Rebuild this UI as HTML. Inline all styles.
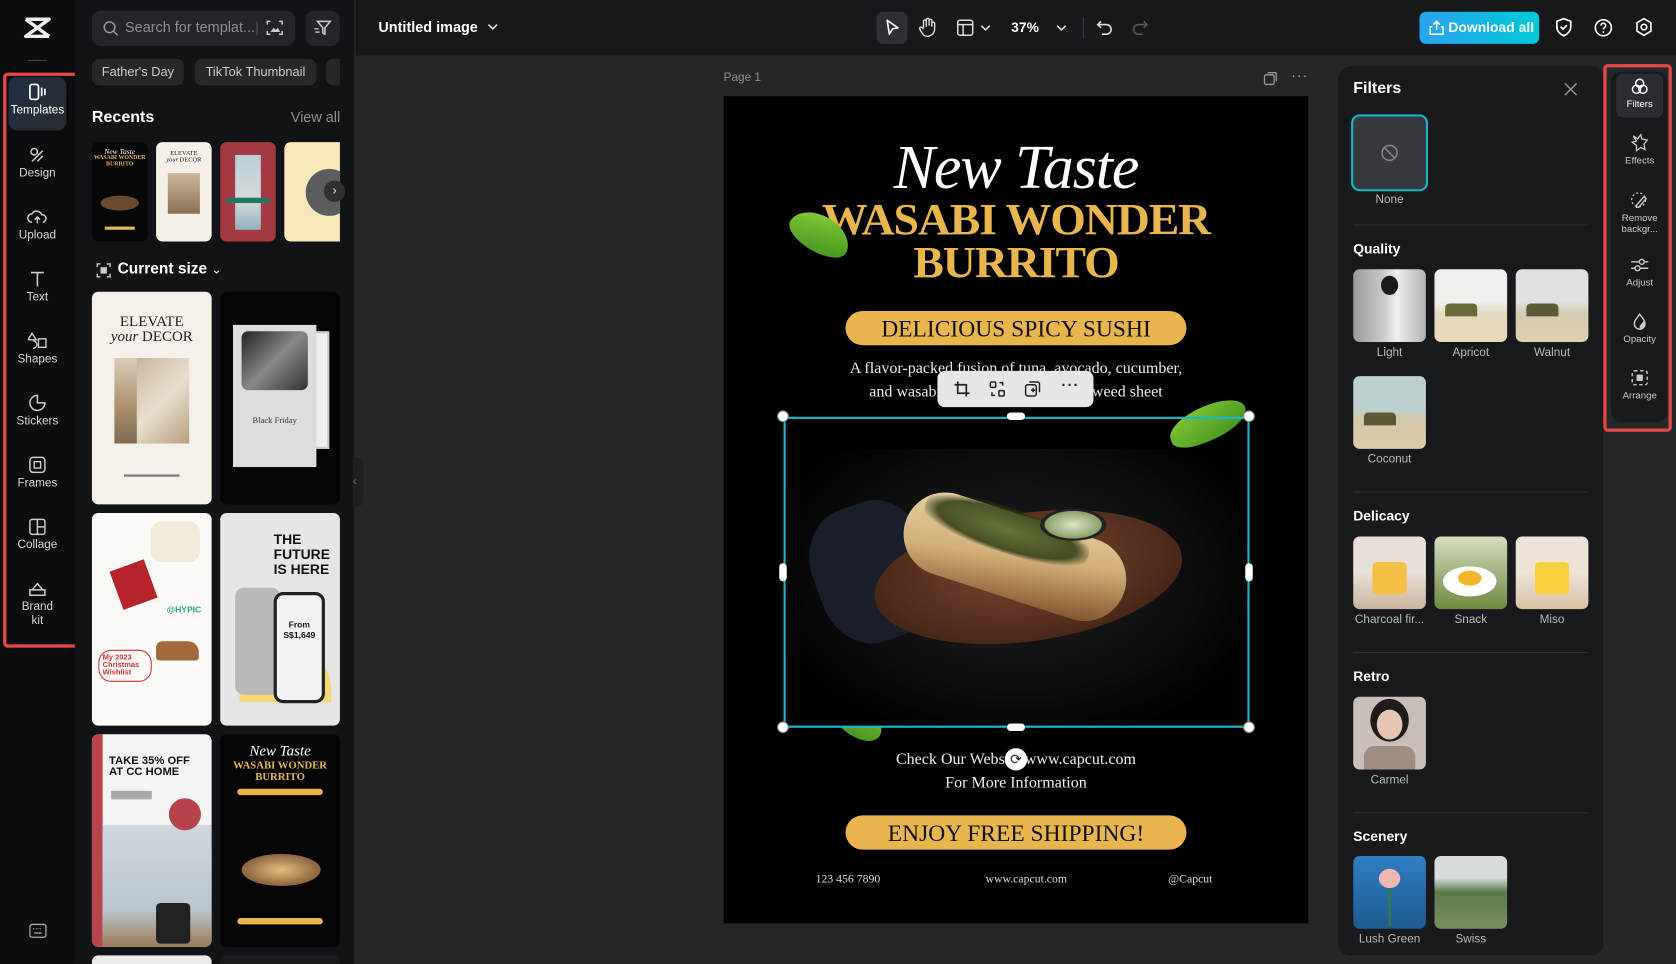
<!DOCTYPE html>
<html><head><meta charset="utf-8">
<style>
*{box-sizing:border-box;margin:0;padding:0}
html,body{width:1676px;height:964px;overflow:hidden;background:#25262a;font-family:"Liberation Sans",sans-serif}
#w{position:absolute;left:0;top:0;width:1568px;height:902px;transform:scale(1.0689,1.0687);transform-origin:0 0;background:#25262a;overflow:hidden}
.a{position:absolute}
.nav{position:absolute;left:8px;width:54px;text-align:center;color:#d4d5d8;font-size:11px}
.nav svg{display:block;margin:0 auto 3px}
.rt{position:absolute;left:1512px;width:44px;text-align:center;color:#c9cacd;font-size:9px;line-height:10px}
.rt svg{display:block;margin:0 auto 3px}
.tile{position:absolute;width:68px;height:68px;border-radius:6px;overflow:hidden}
.lbl{position:absolute;width:80px;text-align:center;color:#b9babd;font-size:11px}
.sec{position:absolute;left:1266px;color:#fff;font-weight:bold;font-size:13px}
.hr{position:absolute;left:1266px;width:220px;height:1px;background:#2c2d32}
.th{position:absolute;border-radius:6px;overflow:hidden}
.serif{font-family:"Liberation Serif",serif}
.pill{position:absolute;left:791px;width:319px;height:32px;border-radius:16px;background:#e8b64c;color:#111;text-align:center;font-family:"Liberation Serif",serif;font-size:22px;line-height:33px}
.h{position:absolute;width:11px;height:11px;border-radius:50%;background:#fff;border:1px solid #888}
</style></head><body><div id="w">

<!-- left rail -->
<div class="a" style="left:0;top:0;width:70px;height:902px;background:#0d0d0f"></div>
<svg class="a" style="left:22px;top:15px" width="26" height="22" viewBox="0 0 26 22"><path d="M2 3h22L2 19h22M2 3l22 16" stroke="#eee" stroke-width="3.2" fill="none" stroke-linejoin="round"/></svg>
<div class="a" style="left:26px;top:56px;width:18px;height:1px;background:#444"></div>
<div class="a" style="left:8px;top:72px;width:54px;height:50px;border-radius:8px;background:linear-gradient(135deg,#1f3042,#2a2c31)"></div>
<div class="nav" style="top:78px;color:#fff"><svg width="20" height="16" viewBox="0 0 20 16"><rect x="3" y="1" width="8" height="14" rx="2" fill="none" stroke="#fff" stroke-width="1.6"/><path d="M14 4v8M17 5v6" stroke="#fff" stroke-width="1.6"/></svg>Templates</div>
<div class="nav" style="top:137px"><svg width="18" height="16" viewBox="0 0 18 16"><circle cx="6" cy="5" r="3" fill="none" stroke="#ccc" stroke-width="1.4"/><path d="M4 14l10-10M9 14l5-5" stroke="#ccc" stroke-width="1.4"/></svg>Design</div>
<div class="nav" style="top:195px"><svg width="20" height="16" viewBox="0 0 20 16"><path d="M5 13a4 4 0 010-8 5 5 0 019 1 3.5 3.5 0 011 7M10 14V8M7.5 10.5L10 8l2.5 2.5" stroke="#ccc" stroke-width="1.4" fill="none"/></svg>Upload</div>
<div class="nav" style="top:253px"><svg width="18" height="16" viewBox="0 0 18 16"><path d="M3 2h12M9 2v13" stroke="#ccc" stroke-width="1.5"/></svg>Text</div>
<div class="nav" style="top:311px"><svg width="18" height="16" viewBox="0 0 18 16"><path d="M4 1l4 6H0zM10 6h7v8h-7zM5 15a3.5 3.5 0 100-7" stroke="#ccc" stroke-width="1.3" fill="none"/></svg>Shapes</div>
<div class="nav" style="top:369px"><svg width="18" height="16" viewBox="0 0 18 16"><path d="M9 1a7 7 0 107 7h-7z" stroke="#ccc" stroke-width="1.4" fill="none"/></svg>Stickers</div>
<div class="nav" style="top:427px"><svg width="18" height="16" viewBox="0 0 18 16"><rect x="2" y="1" width="14" height="14" rx="3" fill="none" stroke="#ccc" stroke-width="1.4"/><rect x="6" y="5" width="6" height="6" fill="none" stroke="#ccc" stroke-width="1.3"/></svg>Frames</div>
<div class="nav" style="top:485px"><svg width="18" height="16" viewBox="0 0 18 16"><rect x="2" y="1" width="14" height="14" rx="2" fill="none" stroke="#ccc" stroke-width="1.4"/><path d="M9 1v14M9 8h7" stroke="#ccc" stroke-width="1.4"/></svg>Collage</div>
<div class="nav" style="top:543px;line-height:13px"><svg width="18" height="16" viewBox="0 0 18 16"><path d="M2 14h14V9H2zM4 9l5-6 5 6" stroke="#ccc" stroke-width="1.4" fill="none"/></svg>Brand<br>kit</div>
<svg class="a" style="left:27px;top:864px" width="17" height="14" viewBox="0 0 17 14"><rect x="1" y="1" width="15" height="12" rx="2" fill="none" stroke="#aaa" stroke-width="1.2"/><path d="M4 5h1M7 5h1M10 5h1M13 5h0M5 9h7" stroke="#aaa" stroke-width="1.2"/></svg>
<div class="a" style="left:3px;top:68px;width:81px;height:538px;border:3px solid #e8484a;border-radius:4px"></div>

<!-- templates panel -->
<div class="a" style="left:70px;top:0;width:262px;height:902px;background:#121316;border-right:1px solid #26272b"></div>
<div class="a" style="left:86px;top:10px;width:190px;height:33px;border-radius:8px;background:#24252a"></div>
<svg class="a" style="left:96px;top:19px" width="15" height="15" viewBox="0 0 15 15"><circle cx="6.5" cy="6.5" r="5" fill="none" stroke="#999" stroke-width="1.4"/><path d="M10 10l4 4" stroke="#999" stroke-width="1.4"/></svg>
<div class="a" style="left:117px;top:18px;color:#8d8e92;font-size:13.5px">Search for templat...</div>
<div class="a" style="left:240px;top:20px;width:1px;height:13px;background:#555"></div>
<svg class="a" style="left:249px;top:18px" width="16" height="16" viewBox="0 0 16 16"><path d="M1 5V2h3M12 2h3v3M15 11v3h-3M4 14H1v-3" stroke="#ccc" stroke-width="1.4" fill="none"/><path d="M4 12l3-4 2 2 2-2 2 4z" fill="#ccc"/></svg>
<div class="a" style="left:286px;top:10px;width:32px;height:33px;border-radius:8px;background:#24252a"></div>
<svg class="a" style="left:293px;top:18px" width="18" height="17" viewBox="0 0 18 17"><path d="M4 2h12l-5 6v6l-2-1V8z" stroke="#ccc" stroke-width="1.4" fill="none"/><path d="M1 9h4M2 12h4" stroke="#ccc" stroke-width="1.2"/></svg>
<div class="a" style="left:86px;top:55px;width:86px;height:25px;border-radius:7px;background:#26272b;color:#ccc;font-size:12px;line-height:25px;text-align:center">Father's Day</div>
<div class="a" style="left:182px;top:55px;width:114px;height:25px;border-radius:7px;background:#26272b;color:#ccc;font-size:12px;line-height:25px;text-align:center">TikTok Thumbnail</div>
<div class="a" style="left:305px;top:55px;width:13px;height:25px;border-radius:7px 0 0 7px;background:#26272b"></div>
<div class="a" style="left:86px;top:101px;color:#fff;font-weight:bold;font-size:15px">Recents</div>
<div class="a" style="left:272px;top:102px;color:#8d8e92;font-size:13.5px">View all</div>

<div class="th" style="left:86px;top:133px;width:52px;height:93px;background:#070707"><div class="a serif" style="left:0;width:52px;top:5px;text-align:center;color:#fff;font-style:italic;font-size:7px">New Taste</div><div class="a serif" style="left:0;width:52px;top:12px;text-align:center;color:#e8b64c;font-weight:bold;font-size:5.5px;line-height:6px">WASABI WONDER<br>BURRITO</div><div class="a" style="left:8px;top:50px;width:36px;height:14px;border-radius:50%;background:#6a4a2a"></div><div class="a" style="left:12px;top:79px;width:28px;height:3px;background:#e8b64c"></div></div>
<div class="th" style="left:146px;top:133px;width:52px;height:93px;background:#f4f0e8"><div class="a serif" style="left:0;width:52px;top:8px;text-align:center;color:#222;font-size:6px">ELEVATE<br><i>your</i> DECOR</div><div class="a" style="left:11px;top:29px;width:30px;height:38px;background:linear-gradient(#cdb89a,#8a7055)"></div></div>
<div class="th" style="left:206px;top:133px;width:52px;height:93px;background:#a33a40"><div class="a" style="left:14px;top:12px;width:24px;height:70px;background:linear-gradient(#b7cfd8,#d9d9d9 60%,#8fb4c0)"></div><div class="a" style="left:6px;top:52px;width:40px;height:5px;background:#1d7a66"></div></div>
<div class="th" style="left:266px;top:133px;width:52px;height:93px;background:#fbe8b8;border-radius:6px 0 0 6px"><div class="a" style="left:20px;top:25px;width:44px;height:44px;border-radius:50%;background:#5a5d60"></div></div>
<div class="a" style="left:303px;top:169px;width:20px;height:20px;border-radius:50%;background:#2f3033;color:#ddd;font-size:12px;text-align:center;line-height:19px">›</div>

<svg class="a" style="left:90px;top:246px" width="14" height="14" viewBox="0 0 14 14"><path d="M1 4V1h3M10 1h3v3M13 10v3h-3M4 13H1v-3" stroke="#ccc" stroke-width="1.3" fill="none"/><rect x="4" y="4" width="6" height="6" fill="#ccc"/></svg>
<div class="a" style="left:110px;top:244px;color:#fff;font-weight:bold;font-size:14.5px">Current size <span style="font-weight:normal;font-size:11px">⌄</span></div>

<div class="th" style="left:86px;top:273px;width:112px;height:199px;background:#f5f1ea"><div class="a serif" style="left:0;width:112px;top:22px;text-align:center;color:#222;font-size:14px;line-height:14px">ELEVATE<br><i>your</i> DECOR</div><div class="a" style="left:21px;top:62px;width:44px;height:80px;background:linear-gradient(#d9ccb6,#a98e6a 60%,#7f6a52)"></div><div class="a" style="left:42px;top:62px;width:49px;height:80px;background:linear-gradient(135deg,#c9b69a,#e9dfcf 50%,#b79e7c)"></div><div class="a" style="left:30px;top:171px;width:52px;height:2px;background:#777"></div></div>
<div class="th" style="left:206px;top:273px;width:112px;height:199px;background:#050505"><div class="a" style="left:46px;top:37px;width:56px;height:110px;background:#eee;border:2px solid #ccc"></div><div class="a" style="left:12px;top:31px;width:78px;height:133px;background:#ddd"></div><div class="a" style="left:20px;top:37px;width:62px;height:55px;border-radius:6px;background:linear-gradient(135deg,#222,#888 50%,#333)"></div><div class="a serif" style="left:12px;width:78px;top:116px;text-align:center;color:#333;font-size:8px">Black Friday</div></div>
<div class="th" style="left:86px;top:480px;width:112px;height:199px;background:#fbfaf7"><div class="a" style="left:55px;top:8px;width:46px;height:38px;border-radius:10px;background:#f1ead9"></div><div class="a" style="left:22px;top:48px;width:34px;height:38px;background:#b6232b;transform:rotate(-20deg)"></div><div class="a" style="left:60px;top:120px;width:40px;height:18px;border-radius:6px 10px 3px 3px;background:#a06a3e"></div><div class="a" style="left:6px;top:128px;width:50px;height:30px;border:1px solid #c33;border-radius:12px;color:#c33;font-size:7px;font-weight:bold;padding:3px">My 2023 Christmas Wishlist</div><div class="a" style="left:70px;top:86px;color:#2aa57a;font-size:8px;font-weight:bold">@HYPIC</div></div>
<div class="th" style="left:206px;top:480px;width:112px;height:199px;background:#e6e6e6"><div class="a" style="left:50px;top:18px;color:#111;font-weight:bold;font-size:13px;line-height:14px">THE<br>FUTURE<br>IS HERE</div><div class="a" style="left:18px;top:123px;width:86px;height:54px;border-radius:43px 43px 0 0;background:#f6d676"></div><div class="a" style="left:14px;top:70px;width:42px;height:100px;border-radius:8px;background:#b9b9b9"></div><div class="a" style="left:50px;top:74px;width:48px;height:104px;border-radius:9px;background:#f2f2f2;border:3px solid #222"></div><div class="a" style="left:52px;top:100px;width:44px;text-align:center;font-size:8px;font-weight:bold;color:#111;line-height:10px">From<br>S$1,649</div></div>
<div class="th" style="left:86px;top:687px;width:112px;height:199px;background:#f4f4f4"><div class="a" style="left:0;top:0;width:10px;height:199px;background:#b8434a"></div><div class="a" style="left:16px;top:20px;color:#111;font-weight:bold;font-size:10.5px;line-height:10px">TAKE 35% OFF<br>AT CC HOME</div><div class="a" style="left:18px;top:53px;width:38px;height:8px;background:#aaa"></div><div class="a" style="left:10px;top:85px;width:102px;height:114px;background:linear-gradient(#cfd8df,#b9c6cf 70%,#9c7a55)"></div><div class="a" style="left:72px;top:60px;width:30px;height:30px;border-radius:50%;background:#b8434a"></div><div class="a" style="left:60px;top:158px;width:32px;height:38px;border-radius:4px;background:#222"></div></div>
<div class="th" style="left:206px;top:687px;width:112px;height:199px;background:#050505"><div class="a serif" style="left:0;width:112px;top:9px;text-align:center;color:#fff;font-style:italic;font-size:14px">New Taste</div><div class="a serif" style="left:0;width:112px;top:24px;text-align:center;color:#e8b64c;font-weight:bold;font-size:10px;line-height:11px">WASABI WONDER<br>BURRITO</div><div class="a" style="left:16px;top:51px;width:80px;height:6px;border-radius:3px;background:#e8b64c"></div><div class="a" style="left:20px;top:112px;width:74px;height:30px;border-radius:50%;background:radial-gradient(#e0c080,#6a3a20)"></div><div class="a" style="left:16px;top:172px;width:80px;height:6px;border-radius:3px;background:#e8b64c"></div></div>
<div class="th" style="left:86px;top:894px;width:112px;height:20px;background:#eeece8"></div>
<div class="th" style="left:206px;top:894px;width:112px;height:20px;background:#1a1a1a"></div>
<div class="a" style="left:330px;top:428px;width:10px;height:46px;border-radius:0 6px 6px 0;background:#1d1e22;color:#777;font-size:11px;line-height:46px">‹</div>

<!-- top bar -->
<div class="a" style="left:333px;top:0;width:1235px;height:52px;background:#17181b"></div>
<div class="a" style="left:354px;top:18px;color:#fff;font-weight:bold;font-size:13.5px">Untitled image</div>
<svg class="a" style="left:456px;top:21px" width="10" height="8" viewBox="0 0 10 8"><path d="M1 2l4 4 4-4" stroke="#ddd" stroke-width="1.5" fill="none"/></svg>
<div class="a" style="left:820px;top:11px;width:29px;height:30px;border-radius:6px;background:#2e2f34"></div>
<svg class="a" style="left:827px;top:17px" width="16" height="18" viewBox="0 0 16 18"><path d="M3 2l10 7-5 1-3 5z" stroke="#fff" stroke-width="1.5" fill="none" stroke-linejoin="round"/></svg>
<svg class="a" style="left:859px;top:16px" width="18" height="19" viewBox="0 0 18 19"><path d="M5 10V4a1.3 1.3 0 012.6 0v5M7.6 8V2.5a1.3 1.3 0 012.6 0V8M10.2 8V3.5a1.3 1.3 0 012.6 0V9M12.8 9V6a1.3 1.3 0 012.6 0v5a7 7 0 01-7 7c-3 0-4-2-6-5l-1-2a1.3 1.3 0 012-1.4L5 11" stroke="#ddd" stroke-width="1.3" fill="none"/></svg>
<svg class="a" style="left:895px;top:18px" width="16" height="16" viewBox="0 0 16 16"><rect x="1" y="1" width="14" height="14" rx="2" fill="none" stroke="#ddd" stroke-width="1.4"/><path d="M1 5h14M6 5v10" stroke="#ddd" stroke-width="1.4"/></svg>
<svg class="a" style="left:917px;top:22px" width="10" height="8" viewBox="0 0 10 8"><path d="M1 2l4 4 4-4" stroke="#ddd" stroke-width="1.5" fill="none"/></svg>
<div class="a" style="left:946px;top:18px;color:#fff;font-weight:bold;font-size:13px">37%</div>
<svg class="a" style="left:988px;top:22px" width="10" height="8" viewBox="0 0 10 8"><path d="M1 2l4 4 4-4" stroke="#ddd" stroke-width="1.5" fill="none"/></svg>
<div class="a" style="left:1013px;top:16px;width:1px;height:20px;background:#3a3b40"></div>
<svg class="a" style="left:1025px;top:18px" width="16" height="16" viewBox="0 0 16 16"><path d="M5 2L2 5l3 3M2 5h8a4.5 4.5 0 010 9H6" stroke="#ddd" stroke-width="1.5" fill="none"/></svg>
<svg class="a" style="left:1059px;top:18px" width="16" height="16" viewBox="0 0 16 16"><path d="M11 2l3 3-3 3M14 5H6a4.5 4.5 0 000 9h4" stroke="#55565a" stroke-width="1.5" fill="none"/></svg>
<div class="a" style="left:1328px;top:11px;width:112px;height:30px;border-radius:6px;background:linear-gradient(90deg,#2aa4ef,#00c9d9)"></div>
<svg class="a" style="left:1337px;top:18px" width="14" height="15" viewBox="0 0 14 15"><path d="M7 10V2M4 5l3-3 3 3M3 7H1v7h12V7h-2" stroke="#fff" stroke-width="1.4" fill="none"/></svg>
<div class="a" style="left:1355px;top:18px;color:#fff;font-weight:bold;font-size:13px">Download all</div>
<svg class="a" style="left:1454px;top:16px" width="18" height="19" viewBox="0 0 18 19"><path d="M9 1.5l6.5 2.5v5c0 4-3 7-6.5 8.5C5.5 16 2.5 13 2.5 9V4z" stroke="#fff" stroke-width="1.6" fill="none"/><path d="M6 9l2.3 2.3L12 7.5" stroke="#fff" stroke-width="1.6" fill="none"/></svg>
<svg class="a" style="left:1491px;top:17px" width="18" height="18" viewBox="0 0 18 18"><circle cx="9" cy="9" r="7.5" stroke="#fff" stroke-width="1.5" fill="none"/><path d="M6.8 7a2.2 2.2 0 114 1.2c-.8.6-1.8 1-1.8 2.3" stroke="#fff" stroke-width="1.5" fill="none"/><circle cx="9" cy="13" r=".9" fill="#fff"/></svg>
<svg class="a" style="left:1529px;top:16px" width="18" height="19" viewBox="0 0 18 19"><path d="M9 1.5l6.5 3.7v8L9 17l-6.5-3.8v-8z" stroke="#fff" stroke-width="1.5" fill="none"/><circle cx="9" cy="9.3" r="2.6" stroke="#fff" stroke-width="1.5" fill="none"/></svg>

<!-- canvas -->
<div class="a" style="left:677px;top:67px;color:#8d8e92;font-size:11px">Page 1</div>
<svg class="a" style="left:1182px;top:67px" width="13" height="13" viewBox="0 0 13 13"><rect x="1" y="3" width="9" height="9" rx="1.5" stroke="#999" stroke-width="1.2" fill="none"/><path d="M4 1h7a1 1 0 011 1v7" stroke="#999" stroke-width="1.2" fill="none"/></svg>
<div class="a" style="left:1208px;top:63px;color:#aaa;font-size:13px;letter-spacing:1px">···</div>
<div class="a" style="left:677px;top:90px;width:547px;height:774px;background:#000;overflow:hidden">
  <div class="a serif" style="left:0;width:547px;top:34px;text-align:center;color:#fff;font-style:italic;font-size:58px;line-height:66px;letter-spacing:-1px">New Taste</div>
  <div class="a serif" style="left:0;width:547px;top:96px;text-align:center;color:#e8b64c;font-weight:bold;font-size:42px;line-height:40px;letter-spacing:-1px;transform:scaleX(1.02)">WASABI WONDER<br>BURRITO</div>
  <div class="a" style="left:60px;top:112px;width:60px;height:34px;border-radius:50% 50% 50% 50%/60% 60% 40% 40%;background:linear-gradient(160deg,#8ad13a,#3b8f1a);transform:rotate(30deg)"></div>
  <div class="a" style="left:415px;top:290px;width:76px;height:32px;border-radius:60% 50% 60% 40%;background:linear-gradient(160deg,#86cc38,#3d8e1c);transform:rotate(-22deg)"></div>
  <div class="a" style="left:94px;top:565px;width:58px;height:32px;border-radius:50%;background:linear-gradient(160deg,#8ad13a,#3d8e1c);transform:rotate(40deg)"></div>
  <div class="a serif" style="left:0;width:547px;top:244px;text-align:center;color:#eee;font-size:15px;line-height:22px">A flavor-packed fusion of tuna, avocado, cucumber,<br>and wasabi mayo wrapped in a seaweed sheet</div>
  <!-- food -->
  <div class="a" style="left:60px;top:330px;width:430px;height:260px;background:radial-gradient(ellipse at 50% 45%,#1e1e20 0%,#0d0d0e 55%,#000 80%)"></div>
  <div class="a" style="left:85px;top:380px;width:110px;height:130px;border-radius:40%;background:#1a1d2a;transform:rotate(-20deg)"></div>
  <div class="a" style="left:140px;top:390px;width:290px;height:120px;border-radius:50%;background:radial-gradient(ellipse at 50% 40%,#7a4a30,#4a2818 70%,#2a150b);transform:rotate(-8deg)"></div>
  <div class="a" style="left:165px;top:392px;width:215px;height:78px;border-radius:40px;background:linear-gradient(170deg,#e8d6a6,#d2b07a 50%,#7a4a25);transform:rotate(18deg)"></div>
  <div class="a" style="left:185px;top:385px;width:160px;height:42px;border-radius:30px;background:radial-gradient(#4f6a2a,#2e3a12 60%,transparent 75%);transform:rotate(18deg);opacity:.85"></div>
  <div class="a" style="left:296px;top:386px;width:62px;height:30px;border-radius:50%;background:radial-gradient(#dfe6c6,#8aa06a 60%,#222 62%)"></div>
  <div class="a serif" style="left:0;width:547px;top:610px;text-align:center;color:#eee;font-size:15px;line-height:22px">Check Our Website www.capcut.com<br>For More Information</div>
  <div class="pill" style="left:114px;top:673px">ENJOY FREE SHIPPING!</div>
  <div class="pill" style="left:114px;top:201px">DELICIOUS SPICY SUSHI</div>
  <div class="a serif" style="left:86px;top:727px;color:#ddd;font-size:11px">123 456 7890</div>
  <div class="a serif" style="left:245px;top:727px;color:#ddd;font-size:11px">www.capcut.com</div>
  <div class="a serif" style="left:416px;top:727px;color:#ddd;font-size:11px">@Capcut</div>
</div>
<!-- selection -->
<div class="a" style="left:733px;top:390px;width:436px;height:291px;border:2px solid #1bb7cc"></div>
<div class="h" style="left:727px;top:384px"></div><div class="h" style="left:1163px;top:384px"></div><div class="h" style="left:727px;top:675px"></div><div class="h" style="left:1163px;top:675px"></div>
<div class="a" style="left:942px;top:386px;width:17px;height:7px;border-radius:4px;background:#fff"></div>
<div class="a" style="left:942px;top:677px;width:17px;height:7px;border-radius:4px;background:#fff"></div>
<div class="a" style="left:729px;top:527px;width:7px;height:17px;border-radius:4px;background:#fff"></div>
<div class="a" style="left:1165px;top:527px;width:7px;height:17px;border-radius:4px;background:#fff"></div>
<div class="a" style="left:940px;top:700px;width:21px;height:21px;border-radius:50%;background:#fff;color:#222;font-size:13px;text-align:center;line-height:21px">⟳</div>
<div class="a" style="left:877px;top:347px;width:146px;height:34px;border-radius:7px;background:#e6e6e8;box-shadow:0 2px 6px rgba(0,0,0,.4)"></div>
<svg class="a" style="left:892px;top:356px" width="16" height="16" viewBox="0 0 16 16"><path d="M4 1v11h11M1 4h11v11" stroke="#222" stroke-width="1.6" fill="none"/></svg>
<svg class="a" style="left:925px;top:356px" width="16" height="16" viewBox="0 0 16 16"><rect x="1.5" y="1.5" width="5" height="5" rx="1" stroke="#222" stroke-width="1.4" fill="none"/><rect x="9.5" y="9.5" width="5" height="5" rx="1" stroke="#222" stroke-width="1.4" fill="none"/><path d="M10 2h3v3M6 14H3v-3" stroke="#222" stroke-width="1.4" fill="none"/></svg>
<svg class="a" style="left:958px;top:356px" width="16" height="16" viewBox="0 0 16 16"><rect x="1.5" y="4" width="10" height="10.5" rx="2" stroke="#222" stroke-width="1.4" fill="none"/><path d="M5 1.5h7.5a2 2 0 012 2V11M6.5 9h4M8.5 7v4" stroke="#222" stroke-width="1.4" fill="none"/></svg>
<div class="a" style="left:993px;top:352px;color:#222;font-size:14px;font-weight:bold;letter-spacing:1px">···</div>

<!-- filters panel -->
<div class="a" style="left:1251px;top:61px;width:250px;height:834px;border-radius:12px;background:#18191c;border:1px solid #26272b"></div>
<div class="a" style="left:1266px;top:74px;color:#fff;font-weight:bold;font-size:15px">Filters</div>
<svg class="a" style="left:1463px;top:77px" width="13" height="13" viewBox="0 0 13 13"><path d="M1 1l11 11M12 1L1 12" stroke="#999" stroke-width="1.3"/></svg>
<div class="a" style="left:1264px;top:107px;width:72px;height:72px;border-radius:8px;border:2px solid #15b4c8;background:#38393e"></div>
<svg class="a" style="left:1291px;top:134px" width="18" height="18" viewBox="0 0 18 18"><circle cx="9" cy="9" r="7" stroke="#888" stroke-width="1.4" fill="none"/><path d="M4 4l10 10" stroke="#888" stroke-width="1.4"/></svg>
<div class="lbl" style="left:1260px;top:181px">None</div>
<div class="hr" style="top:210px"></div>
<div class="sec" style="top:225px">Quality</div>
<div class="tile" style="left:1266px;top:252px;background:linear-gradient(90deg,#9a9a9c,#c8c8ca 40%,#efefef 60%,#b0b0b2)"><div class="a" style="left:26px;top:6px;width:16px;height:18px;border-radius:50%;background:#1a1a1a"></div></div>
<div class="tile" style="left:1342px;top:252px;background:linear-gradient(#efefed 45%,#e6d9bf 60%,#ead9b8)"><div class="a" style="left:10px;top:32px;width:30px;height:12px;background:#6a6a3a;border-radius:4px 4px 0 0"></div></div>
<div class="tile" style="left:1418px;top:252px;background:linear-gradient(#dfe2e0 45%,#d8cbae 60%,#e0cfae)"><div class="a" style="left:10px;top:32px;width:30px;height:12px;background:#5a5a35;border-radius:4px 4px 0 0"></div></div>
<div class="lbl" style="left:1260px;top:324px">Light</div><div class="lbl" style="left:1336px;top:324px">Apricot</div><div class="lbl" style="left:1412px;top:324px">Walnut</div>
<div class="tile" style="left:1266px;top:352px;background:linear-gradient(#bdd0cf 45%,#d6c8a8 60%,#dccaa6)"><div class="a" style="left:10px;top:34px;width:30px;height:12px;background:#5a5a35;border-radius:4px 4px 0 0"></div></div>
<div class="lbl" style="left:1260px;top:424px">Coconut</div>
<div class="hr" style="top:460px"></div>
<div class="sec" style="top:475px">Delicacy</div>
<div class="tile" style="left:1266px;top:502px;background:linear-gradient(#e9dfd6 50%,#c9b49a)"><div class="a" style="left:18px;top:24px;width:32px;height:30px;border-radius:4px;background:#f3c045"></div></div>
<div class="tile" style="left:1342px;top:502px;background:linear-gradient(#d5ddc0,#6e8a3f)"><div class="a" style="left:8px;top:28px;width:50px;height:28px;border-radius:50%;background:#fff"></div><div class="a" style="left:22px;top:32px;width:22px;height:14px;border-radius:50%;background:#f3b72a"></div></div>
<div class="tile" style="left:1418px;top:502px;background:linear-gradient(#efe2d6 50%,#d9c2a4)"><div class="a" style="left:18px;top:24px;width:32px;height:30px;border-radius:4px;background:#f7d23c"></div></div>
<div class="lbl" style="left:1260px;top:574px">Charcoal fir...</div><div class="lbl" style="left:1336px;top:574px">Snack</div><div class="lbl" style="left:1412px;top:574px">Miso</div>
<div class="hr" style="top:610px"></div>
<div class="sec" style="top:625px">Retro</div>
<div class="tile" style="left:1266px;top:652px;background:#c9bfb8"><div class="a" style="left:16px;top:2px;width:36px;height:40px;border-radius:50%;background:#1e1a1a"></div><div class="a" style="left:22px;top:12px;width:24px;height:28px;border-radius:50%;background:#e6c5b2"></div><div class="a" style="left:10px;top:46px;width:48px;height:22px;border-radius:10px 10px 0 0;background:#a08c80"></div></div>
<div class="lbl" style="left:1260px;top:724px">Carmel</div>
<div class="hr" style="top:760px"></div>
<div class="sec" style="top:775px">Scenery</div>
<div class="tile" style="left:1266px;top:801px;background:linear-gradient(#2f7fc4,#1d5a8f)"><div class="a" style="left:24px;top:12px;width:20px;height:18px;border-radius:50%;background:#f2b7b0"></div><div class="a" style="left:33px;top:30px;width:2px;height:36px;background:#3a7a3a"></div></div>
<div class="tile" style="left:1342px;top:801px;background:linear-gradient(#d8dcdc 30%,#5b7a4a 50%,#7a8e5e)"></div>
<div class="lbl" style="left:1260px;top:873px">Lush Green</div><div class="lbl" style="left:1336px;top:873px">Swiss</div>

<!-- right rail -->
<div class="a" style="left:1507px;top:67px;width:53px;height:328px;border-radius:10px;background:#18191c"></div>
<div class="a" style="left:1512px;top:69px;width:44px;height:41px;border-radius:7px;background:#2c2d32"></div>
<div class="rt" style="top:73px;color:#fff"><svg width="18" height="16" viewBox="0 0 18 16"><circle cx="9" cy="5" r="3.8" stroke="#fff" stroke-width="1.4" fill="none"/><circle cx="6" cy="10.5" r="3.8" stroke="#fff" stroke-width="1.4" fill="none"/><circle cx="12" cy="10.5" r="3.8" stroke="#fff" stroke-width="1.4" fill="none"/></svg>Filters</div>
<div class="rt" style="top:125px"><svg width="18" height="17" viewBox="0 0 18 17"><path d="M3 2l4 3 3-4 1 4 5 1-3 4 1 5-4-2-4 3 0-5L2 8l4-1z" stroke="#ccc" stroke-width="1.2" fill="none"/></svg>Effects</div>
<div class="rt" style="top:179px"><svg width="18" height="17" viewBox="0 0 18 17"><circle cx="8" cy="8" r="6.5" stroke="#ccc" stroke-width="1.1" fill="none" stroke-dasharray="2 2"/><path d="M6 13l7-8 2 2-7 8H6z" stroke="#ccc" stroke-width="1.3" fill="#18191c"/></svg>Remove<br>backgr...</div>
<div class="rt" style="top:240px"><svg width="18" height="16" viewBox="0 0 18 16"><path d="M1 5h16M1 11h16" stroke="#ccc" stroke-width="1.3"/><circle cx="11" cy="5" r="2.3" fill="#18191c" stroke="#ccc" stroke-width="1.3"/><circle cx="7" cy="11" r="2.3" fill="#18191c" stroke="#ccc" stroke-width="1.3"/></svg>Adjust</div>
<div class="rt" style="top:293px"><svg width="18" height="16" viewBox="0 0 18 16"><path d="M9 1c3 4 5 6 5 9a5 5 0 01-10 0c0-3 2-5 5-9z" stroke="#ccc" stroke-width="1.3" fill="none"/><path d="M9 15a5 5 0 005-5c0-1-.3-2-1-3L9 12z" fill="#ccc"/></svg>Opacity</div>
<div class="rt" style="top:345px"><svg width="18" height="17" viewBox="0 0 18 17"><rect x="2" y="2" width="14" height="13" rx="2" stroke="#ccc" stroke-width="1.3" fill="none" stroke-dasharray="3 2.5"/><rect x="6" y="5.5" width="6" height="6" rx="1" fill="#ccc"/></svg>Arrange</div>
<div class="a" style="left:1500px;top:60px;width:64px;height:344px;border:3px solid #e8484a;border-radius:4px"></div>

</div></body></html>
